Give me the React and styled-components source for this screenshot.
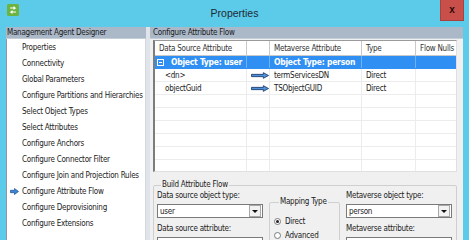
import React from "react";
import styled, { createGlobalStyle } from "styled-components";

const FONT = `"DejaVu Sans Condensed", "Liberation Sans", sans-serif`;

const GlobalStyle = createGlobalStyle`
  html, body {
    margin: 0;
    padding: 0;
    background: #5ccae9;
  }
  * {
    box-sizing: border-box;
  }
`;

const Window = styled.div`
  width: 469px;
  height: 240px;
  overflow: hidden;
  background: #5ccae9;
  display: flex;
  flex-direction: column;
  font-family: ${FONT};
  font-size: 8px;
  letter-spacing: -0.25px;
  color: #1b1b1b;
`;

const TitleBar = styled.div`
  height: 27px;
  flex: none;
  display: flex;
  align-items: flex-start;
  background: #5ccae9;
`;

const AppIcon = styled.div`
  width: 40px;
  flex: none;
  padding: 4px 0 0 7px;
  line-height: 0;
`;

const Title = styled.div`
  flex: 1;
  text-align: center;
  padding-top: 7px;
  font-family: "Liberation Sans", sans-serif;
  font-size: 10.5px;
  letter-spacing: 0;
  color: #1c2a33;
`;

const CloseButton = styled.div`
  flex: none;
  width: 24px;
  height: 21px;
  margin: 0 5px 0 11px;
  background: #c9504a;
  border: 1px solid #a9423c;
  border-top: 0;
  display: flex;
  align-items: center;
  justify-content: center;
  color: #2a0c0a;
  font-family: "Liberation Sans", sans-serif;
  font-weight: bold;
  font-size: 10px;
  letter-spacing: 0;
  line-height: 1;
`;

const Body = styled.div`
  flex: 1;
  display: flex;
  padding: 0 6px;
  min-height: 0;
`;

const LeftPane = styled.div`
  width: 140px;
  flex: none;
  display: flex;
  flex-direction: column;
  background: #fff;
`;

const Splitter = styled.div`
  width: 4px;
  flex: none;
  background: #dfe4ea;
`;

const RightPane = styled.div`
  flex: 1;
  display: flex;
  flex-direction: column;
  background: #f0f0f0;
  min-width: 0;
`;

const PaneHeader = styled.div`
  height: 12px;
  flex: none;
  background: #aab8c8;
  border-bottom: 1px solid #c4ced8;
  padding-left: ${p => p.indent}px;
  line-height: 11px;
  white-space: nowrap;
`;

const NavList = styled.div`
  flex: 1;
  border-left: 1px solid #8f98a2;
  border-right: 1px solid #d4d8dc;
`;

const NavItem = styled.div`
  height: 16px;
  display: flex;
  align-items: center;
  padding-left: 3px;
  white-space: nowrap;
`;

const NavMarker = styled.span`
  width: 12px;
  flex: none;
  display: flex;
  align-items: center;
  line-height: 0;
`;

const Grid = styled.div`
  margin: 1px 6px 0 3px;
  height: 132px;
  flex: none;
  background: #fff;
  border-left: 2px solid #7d7d7d;
  border-top: 1px solid #9a9a9a;
  border-right: 1px solid #e0e0e0;
  border-bottom: 1px solid #e0e0e0;
  overflow: hidden;
`;

const GridRow = styled.div`
  display: grid;
  grid-template-columns: 92px 23px 92px 54px 41px;
  height: ${p => (p.header ? 15 : 13)}px;
  background: ${p => (p.selected ? "#2f8ff3" : "#fff")};
  color: ${p => (p.selected ? "#fff" : p.header ? "#333" : "#1b1b1b")};
  font-weight: ${p => (p.selected ? "bold" : "normal")};
  border-bottom: 1px solid ${p => (p.header ? "#c9c9c9" : p.selected ? "#2f8ff3" : "#ececec")};
`;

const GridCell = styled.div`
  display: flex;
  align-items: center;
  padding-left: ${p => p.indent ?? 4}px;
  white-space: nowrap;
  overflow: hidden;
  border-right: 1px solid ${p => (p.header ? "#c9c9c9" : p.selected ? "#6fb1f6" : "#ececec")};
  font-size: ${p => (p.big ? 8.5 : 8)}px;
  justify-content: ${p => (p.center ? "center" : "flex-start")};
`;

const Expander = styled.span`
  width: 7px;
  height: 7px;
  border: 1px solid #fff;
  margin-right: 7px;
  position: relative;
  flex: none;

  &::after {
    content: "";
    position: absolute;
    left: 1px;
    right: 1px;
    top: 2px;
    height: 1px;
    background: #fff;
  }
`;

const GroupBox = styled.fieldset`
  margin: ${p => p.margin};
  padding: ${p => p.pad};
  border: 1px solid #cfcfcf;
  border-radius: 2px;
  min-width: 0;
  flex: none;
  width: ${p => (p.w ? `${p.w}px` : "auto")};
`;

const GroupLegend = styled.legend`
  padding: 0 1px;
  margin-left: ${p => p.offset}px;
  font-size: 8px;
  line-height: 10px;
  white-space: nowrap;
`;

const FormColumns = styled.div`
  display: flex;
  gap: 6px;
`;

const Field = styled.div`
  width: 106px;
  flex: none;
  display: flex;
  flex-direction: column;
`;

const FieldLabel = styled.div`
  height: 10px;
  line-height: 10px;
  margin: ${p => p.top}px 0 3px;
  white-space: nowrap;
`;

const Combo = styled.div`
  height: 14px;
  background: #fff;
  border: 1px solid #7a7a7a;
  display: flex;
  align-items: center;
  padding-left: 2px;
`;

const ComboText = styled.span`
  flex: 1;
`;

const DropButton = styled.span`
  width: 12px;
  height: 12px;
  margin-right: 1px;
  border: 1px solid #a8a8a8;
  background: #f2f2f2;
  display: flex;
  align-items: center;
  justify-content: center;

  &::after {
    content: "";
    border-left: 3px solid transparent;
    border-right: 3px solid transparent;
    border-top: 3px solid #111;
  }
`;

const RadioRow = styled.div`
  display: flex;
  align-items: center;
  height: 14px;
  gap: 4px;
  white-space: nowrap;
`;

const Radio = styled.span`
  width: 7px;
  height: 7px;
  flex: none;
  border-radius: 50%;
  border: 1px solid #7a7a7a;
  background: #fff;
  display: flex;
  align-items: center;
  justify-content: center;

  &::after {
    content: "";
    width: 3px;
    height: 3px;
    border-radius: 50%;
    background: ${p => (p.checked ? "#222" : "transparent")};
  }
`;

const FlowArrow = () => (
  <svg width="19" height="7" viewBox="0 0 19 7">
    <path
      d="M0.5 2.3 H13 V0.5 L18.5 3.5 L13 6.5 V4.7 H0.5 Z"
      fill="#4d93dc"
      stroke="#1d3768"
      strokeWidth="0.9"
      strokeLinejoin="round"
    />
  </svg>
);

const navItems = [
  "Properties",
  "Connectivity",
  "Global Parameters",
  "Configure Partitions and Hierarchies",
  "Select Object Types",
  "Select Attributes",
  "Configure Anchors",
  "Configure Connector Filter",
  "Configure Join and Projection Rules",
  "Configure Attribute Flow",
  "Configure Deprovisioning",
  "Configure Extensions"
];

const flows = [
  { source: "<dn>", target: "termServicesDN", type: "Direct" },
  { source: "objectGuid", target: "TSObjectGUID", type: "Direct" }
];

const App = () => (
  <Window>
    <GlobalStyle />
    <TitleBar>
      <AppIcon>
        <svg width="12" height="12" viewBox="0 0 12 12">
          <rect x="0" y="0" width="12" height="12" rx="1.5" fill="#6db33f" />
          <path d="M3 4 H8 L6.5 2.6 M8 4 L6.5 5.4" stroke="#fff" strokeWidth="1.2" fill="none" />
          <path d="M9 8 H4 L5.5 6.6 M4 8 L5.5 9.4" stroke="#fff" strokeWidth="1.2" fill="none" />
        </svg>
      </AppIcon>
      <Title>Properties</Title>
      <CloseButton>x</CloseButton>
    </TitleBar>
    <Body>
      <LeftPane>
        <PaneHeader indent={1}>Management Agent Designer</PaneHeader>
        <NavList>
          {navItems.map(item => (
            <NavItem key={item}>
              <NavMarker>
                {item === "Configure Attribute Flow" && (
                  <svg width="9" height="7" viewBox="0 0 9 7">
                    <path d="M0.5 2.3 H4.5 V0.5 L8.5 3.5 L4.5 6.5 V4.7 H0.5 Z" fill="#3b86d6" stroke="#1d4f8f" strokeWidth="0.7" />
                  </svg>
                )}
              </NavMarker>
              {item}
            </NavItem>
          ))}
        </NavList>
      </LeftPane>
      <Splitter />
      <RightPane>
        <PaneHeader indent={3}>Configure Attribute Flow</PaneHeader>
        <Grid>
          <GridRow header>
            <GridCell header>Data Source Attribute</GridCell>
            <GridCell header />
            <GridCell header>Metaverse Attribute</GridCell>
            <GridCell header>Type</GridCell>
            <GridCell header>Flow Nulls</GridCell>
          </GridRow>
          <GridRow selected>
            <GridCell selected indent={2} big>
              <Expander />
              Object Type: user
            </GridCell>
            <GridCell selected />
            <GridCell selected big>Object Type: person</GridCell>
            <GridCell selected />
            <GridCell selected />
          </GridRow>
          {flows.map(row => (
            <GridRow key={row.target}>
              <GridCell indent={10}>{row.source}</GridCell>
              <GridCell center>
                <FlowArrow />
              </GridCell>
              <GridCell>{row.target}</GridCell>
              <GridCell>{row.type}</GridCell>
              <GridCell />
            </GridRow>
          ))}
          {[0, 1, 2, 3, 4, 5].map(i => (
            <GridRow key={i}>
              <GridCell />
              <GridCell />
              <GridCell />
              <GridCell />
              <GridCell />
            </GridRow>
          ))}
        </Grid>
        <GroupBox margin="8px 6px 0 3px" pad="0 4px 0 3px">
          <GroupLegend offset={4}>Build Attribute Flow</GroupLegend>
          <FormColumns>
            <Field>
              <FieldLabel top={1}>Data source object type:</FieldLabel>
              <Combo>
                <ComboText>user</ComboText>
                <DropButton />
              </Combo>
              <FieldLabel top={6}>Data source attribute:</FieldLabel>
              <Combo />
            </Field>
            <GroupBox w={71} margin="7px 0 0 0" pad="7px 3px 0 4px">
              <GroupLegend offset={5}>Mapping Type</GroupLegend>
              <RadioRow>
                <Radio checked />
                Direct
              </RadioRow>
              <RadioRow>
                <Radio />
                Advanced
              </RadioRow>
            </GroupBox>
            <Field>
              <FieldLabel top={1}>Metaverse object type:</FieldLabel>
              <Combo>
                <ComboText>person</ComboText>
                <DropButton />
              </Combo>
              <FieldLabel top={6}>Metaverse attribute:</FieldLabel>
              <Combo />
            </Field>
          </FormColumns>
        </GroupBox>
      </RightPane>
    </Body>
  </Window>
);

export default App;
